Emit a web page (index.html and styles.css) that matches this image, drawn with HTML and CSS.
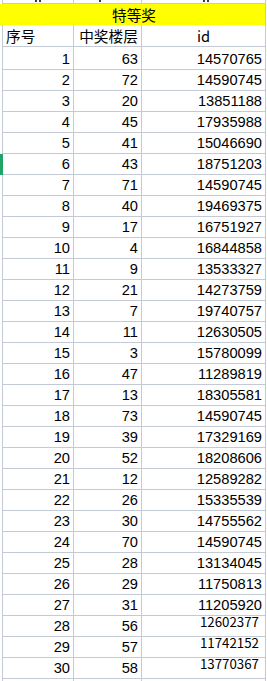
FILE: index.html
```html
<!DOCTYPE html>
<html lang="zh-CN">
<head>
<meta charset="utf-8">
<title>特等奖</title>
<link rel="stylesheet" href="styles.css">
</head>
<body>
<div class="sheet">
  <div class="grid">
    <div class="c top t1"><i class="mark"></i><i class="mark"></i></div>
    <div class="c top t2"><i class="mark"></i></div>
    <div class="c top t3"><i class="mark"></i><i class="mark"></i></div>

    <div class="c title">特等奖</div>

    <div class="c head left">序号</div>
    <div class="c head mid floor">中奖楼层</div>
    <div class="c head mid">id</div>

    <div class="c n first">1</div><div class="c n first">63</div><div class="c n first">14570765</div>
    <div class="c n">2</div><div class="c n">72</div><div class="c n">14590745</div>
    <div class="c n">3</div><div class="c n">20</div><div class="c n">13851188</div>
    <div class="c n">4</div><div class="c n">45</div><div class="c n">17935988</div>
    <div class="c n">5</div><div class="c n">41</div><div class="c n">15046690</div>
    <div class="c n sel">6</div><div class="c n">43</div><div class="c n">18751203</div>
    <div class="c n">7</div><div class="c n">71</div><div class="c n">14590745</div>
    <div class="c n">8</div><div class="c n">40</div><div class="c n">19469375</div>
    <div class="c n">9</div><div class="c n">17</div><div class="c n">16751927</div>
    <div class="c n">10</div><div class="c n">4</div><div class="c n">16844858</div>
    <div class="c n">11</div><div class="c n">9</div><div class="c n">13533327</div>
    <div class="c n">12</div><div class="c n">21</div><div class="c n">14273759</div>
    <div class="c n">13</div><div class="c n">7</div><div class="c n">19740757</div>
    <div class="c n">14</div><div class="c n">11</div><div class="c n">12630505</div>
    <div class="c n">15</div><div class="c n">3</div><div class="c n">15780099</div>
    <div class="c n">16</div><div class="c n">47</div><div class="c n">11289819</div>
    <div class="c n">17</div><div class="c n">13</div><div class="c n">18305581</div>
    <div class="c n">18</div><div class="c n">73</div><div class="c n">14590745</div>
    <div class="c n">19</div><div class="c n">39</div><div class="c n">17329169</div>
    <div class="c n">20</div><div class="c n">52</div><div class="c n">18208606</div>
    <div class="c n">21</div><div class="c n">12</div><div class="c n">12589282</div>
    <div class="c n">22</div><div class="c n">26</div><div class="c n">15335539</div>
    <div class="c n">23</div><div class="c n">30</div><div class="c n">14755562</div>
    <div class="c n">24</div><div class="c n">70</div><div class="c n">14590745</div>
    <div class="c n">25</div><div class="c n">28</div><div class="c n">13134045</div>
    <div class="c n">26</div><div class="c n">29</div><div class="c n">11750813</div>
    <div class="c n">27</div><div class="c n">31</div><div class="c n">11205920</div>
    <div class="c n">28</div><div class="c n">56</div><div class="c n alt">12602377</div>
    <div class="c n">29</div><div class="c n">57</div><div class="c n alt">11742152</div>
    <div class="c n">30</div><div class="c n">58</div><div class="c n alt">13770367</div>

    <div class="c tail"></div><div class="c tail"></div><div class="c tail"></div>
  </div>
</div>
</body>
</html>
```
FILE: styles.css
```css
html, body {
  margin: 0;
  padding: 0;
  background: #fff;
}

body {
  width: 267px;
  height: 681px;
  overflow: hidden;
  font-family: "Liberation Sans", Arial, sans-serif;
  color: #000;
}

.sheet {
  padding-left: 2px;
}

.grid {
  display: grid;
  grid-template-columns: 71px 68px 124px;
  grid-template-rows: 4px 21px 22px 23px repeat(29, 21px) 4px;
  border-left: 1px solid #c3cad6;
  width: 264px;
}

.c {
  box-sizing: border-box;
  border-right: 1px solid #c3cad6;
  border-bottom: 1px solid #c3cad6;
  display: flex;
  align-items: flex-end;
  overflow: hidden;
  white-space: nowrap;
}

.top {
  align-items: flex-start;
  gap: 2px;
}

.mark {
  display: block;
  width: 2px;
  height: 2px;
  background: #3a3a3a;
}

.t1 { padding-left: 32px; }
.t2 { padding-left: 25px; }
.t3 { padding-left: 61px; }

.title {
  grid-column: 1 / 4;
  background: #ffff00;
  box-shadow: -3px 0 0 #ffff00;
  border-bottom-color: #ffff00;
  font-family: "Noto Sans CJK SC", "Microsoft YaHei", sans-serif;
  font-size: 14.67px;
  line-height: 18px;
  justify-content: center;
}

.head {
  font-family: "Noto Sans CJK SC", "Microsoft YaHei", sans-serif;
  font-size: 14.67px;
  line-height: 18px;
  padding-bottom: 1px;
}

.head.left {
  padding-left: 3px;
}

.head.mid {
  justify-content: center;
}

.head.floor {
  padding-left: 2px;
}

.n {
  font-size: 14.67px;
  line-height: 16px;
  justify-content: flex-end;
  padding-right: 3px;
  padding-bottom: 2px;
}

.n.sel {
  box-shadow: -3px 0 0 #21a465;
}

.n.alt {
  font-family: "Noto Sans CJK SC", "Microsoft YaHei", sans-serif;
  font-size: 13.3px;
  line-height: 16px;
  padding-right: 6px;
  padding-bottom: 6px;
  overflow: visible;
}

.tail {
  border-bottom: none;
}
```
